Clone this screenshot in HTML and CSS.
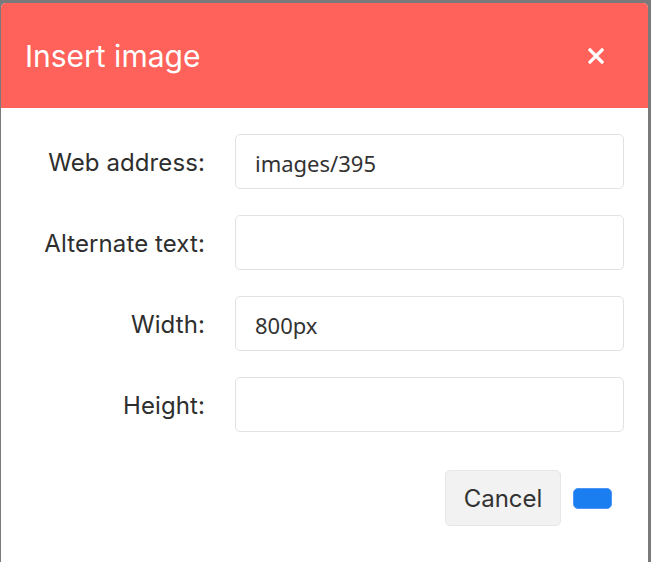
FILE: index.html
```html
<!DOCTYPE html>
<html>
<head>
<meta charset="utf-8">
<link rel="stylesheet" href="styles.css">
</head>
<body>
<div class="dialog">
  <div class="header">
    <div class="title">Insert image</div>
    <div class="close">
      <svg width="16" height="16" viewBox="0 0 16 16"><path d="M2 2 L14 14 M14 2 L2 14" stroke="#fff" stroke-width="3.2" stroke-linecap="square"/></svg>
    </div>
  </div>
  <div class="body">
    <div class="form">
      <label class="label">Web address:</label>
      <div class="input">images/395</div>
      <label class="label">Alternate text:</label>
      <div class="input"></div>
      <label class="label">Width:</label>
      <div class="input">800px</div>
      <label class="label">Height:</label>
      <div class="input"></div>
    </div>
    <div class="actions">
      <div class="btn-cancel">Cancel</div>
      <div class="btn-ok"></div>
    </div>
  </div>
</div>
</body>
</html>
```
FILE: styles.css
```css
html, body {
  margin: 0;
  padding: 0;
  background: #7a7a7a;
  height: 562px;
  overflow: hidden;
}
.dialog {
  margin: 3px 3px 0 1px;
  width: 647px;
  height: 559px;
  background: #fff;
  border-radius: 5px 5px 0 0;
  overflow: hidden;
  font-family: Inter, "Noto Sans", sans-serif;
}
.header {
  height: 105px;
  background: #ff625a;
  display: flex;
  align-items: center;
  justify-content: space-between;
  padding: 0 44px 0 24px;
}
.title {
  color: #fff;
  font-family: Inter, sans-serif;
  font-size: 30px;
  font-weight: 400;
}
.close {
  width: 16px;
  height: 16px;
  display: flex;
}
.body {
  padding: 26px 24px 0 24px;
}
.form {
  display: grid;
  grid-template-columns: 180px 1fr;
  column-gap: 30px;
  row-gap: 26px;
}
.label {
  text-align: right;
  font-size: 24px;
  letter-spacing: 0.1px;
  color: #2e2e2e;
  align-self: center;
  padding-top: 2px;
}
.input {
  height: 55px;
  box-sizing: border-box;
  border: 1px solid #e2e2e2;
  border-radius: 5px;
  padding: 2px 19px 0 19px;
  display: flex;
  align-items: center;
  font-family: "Noto Sans", sans-serif;
  font-size: 22px;
  color: #333;
}
.actions {
  display: flex;
  justify-content: flex-end;
  align-items: center;
  gap: 12px;
  margin-top: 38px;
  padding-right: 12px;
}
.btn-cancel {
  width: 116px;
  height: 56px;
  box-sizing: border-box;
  background: #f2f2f2;
  border: 1px solid #e6e6e6;
  border-radius: 5px;
  display: flex;
  align-items: center;
  justify-content: center;
  font-size: 24px;
  color: #333;
}
.btn-ok {
  width: 39px;
  height: 21px;
  box-sizing: border-box;
  background: #1a7ef0;
  border: 1px solid #4a95f5;
  border-radius: 5px;
}
```
